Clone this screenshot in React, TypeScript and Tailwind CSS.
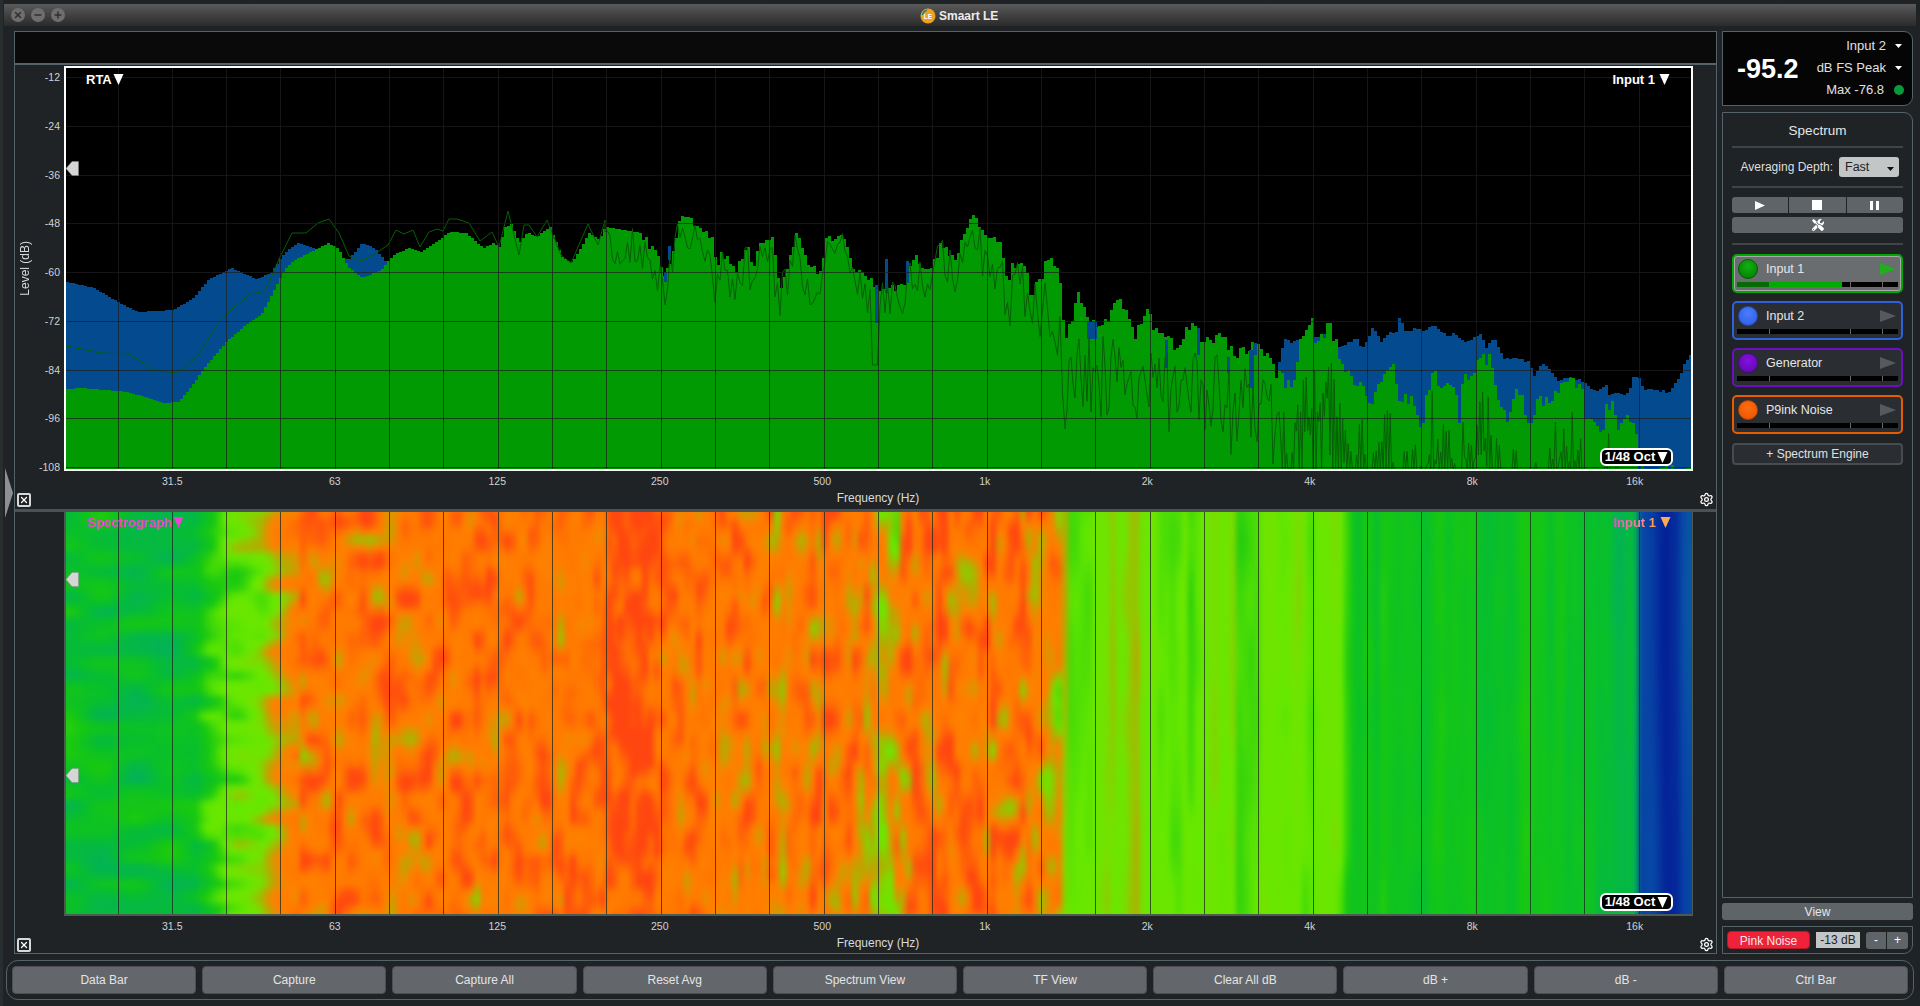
import { Minus, Plus, Settings, X } from "lucide-react";
import { FaTools } from "react-icons/fa";

type Pt = [number, number];

// traced outlines of the two traces, in page pixels
const greenPts: Pt[] = [[66,389],[80,388],[127,392],[143,397],[163,403],[177,402],[190,387],[203,368],[227,340],[247,323],[260,315],[273,290],[283,270],[293,260],[310,252],[327,243],[337,248],[347,267],[361,278],[380,270],[392,255],[408,248],[420,252],[433,243],[449,232],[465,233],[482,248],[492,243],[498,247],[504,227],[510,224],[518,243],[527,232],[535,237],[549,227],[561,257],[571,263],[588,233],[598,240],[604,227],[640,233],[658,260],[662,277],[669,260],[679,217],[695,223],[711,240],[715,267],[720,253],[736,270],[746,242],[752,267],[760,240],[771,238],[779,290],[795,233],[807,268],[820,273],[824,240],[836,237],[842,232],[852,267],[862,270],[875,287],[885,287],[901,287],[913,255],[922,270],[934,262],[940,242],[954,260],[964,233],[971,217],[987,237],[999,242],[1007,292],[1009,268],[1024,260],[1028,297],[1048,260],[1058,275],[1064,337],[1077,295],[1087,322],[1105,320],[1113,305],[1126,303],[1134,340],[1146,305],[1154,330],[1167,340],[1175,350],[1187,323],[1199,337],[1207,338],[1224,337],[1232,357],[1252,343],[1260,350],[1279,377],[1290,390],[1303,325],[1312,323],[1313,340],[1322,337],[1327,323],[1335,343],[1340,365],[1347,373],[1360,387],[1370,413],[1378,373],[1383,380],[1392,360],[1397,400],[1408,397],[1420,427],[1432,363],[1438,397],[1447,387],[1455,397],[1457,430],[1462,377],[1472,380],[1477,352],[1490,363],[1497,397],[1507,417],[1517,387],[1525,417],[1530,423],[1535,398],[1547,403],[1568,377],[1582,395],[1583,423],[1597,425],[1602,435],[1605,407],[1613,403],[1617,427],[1628,420],[1635,433],[1636,472],[1692,472]];
const bluePts: Pt[] = [[66,282],[93,288],[117,302],[137,312],[173,310],[193,297],[207,280],[230,268],[255,279],[270,273],[283,253],[297,243],[308,247],[330,255],[347,260],[361,243],[373,248],[386,263],[392,300],[400,472],[1268,472],[1276,372],[1283,337],[1290,343],[1300,340],[1313,338],[1322,335],[1337,347],[1347,343],[1355,337],[1360,348],[1368,337],[1372,327],[1380,342],[1388,332],[1397,333],[1398,318],[1405,333],[1413,328],[1423,332],[1433,325],[1440,333],[1450,337],[1453,332],[1465,343],[1472,337],[1478,333],[1485,347],[1493,338],[1503,360],[1513,358],[1527,362],[1533,377],[1540,363],[1547,367],[1557,380],[1572,377],[1583,382],[1595,393],[1605,385],[1608,395],[1627,393],[1632,378],[1638,378],[1642,388],[1657,390],[1668,392],[1677,380],[1683,363],[1692,350]];
const linePts: Pt[] = [[66,346],[102,353],[130,354],[153,370],[177,373],[197,357],[217,325],[233,308],[250,294],[265,291],[280,257],[292,233],[306,233],[318,223],[329,219],[339,233],[349,256],[361,261],[373,255],[388,245],[396,230],[404,234],[413,230],[420,247],[429,232],[437,229],[443,231],[449,219],[457,219],[469,223],[480,241],[492,232],[499,247],[508,211],[519,255],[524,225],[529,225],[537,237],[547,220],[561,255],[571,263],[588,224],[598,245],[605,220]];
const blueSpots = [[875,285,3,38],[885,259,3,34],[906,261,3,22],[668,246,3,14],[664,272,3,10],[1087,322,10,17],[1165,340,3,28],[1197,328,3,27],[1227,357,3,16],[1249,350,5,38],[1253,343,4,12]];

const profile: Pt[] = [[60,0.47],[150,0.46],[195,0.47],[210,0.56],[228,0.63],[262,0.67],[282,0.77],[300,0.84],[600,0.86],[610,0.92],[655,0.92],[668,0.85],[770,0.85],[780,0.74],[792,0.85],[865,0.84],[875,0.75],[900,0.75],[912,0.85],[1030,0.84],[1041,0.8],[1058,0.75],[1068,0.65],[1095,0.66],[1130,0.69],[1150,0.64],[1312,0.64],[1338,0.65],[1350,0.55],[1367,0.5],[1583,0.5],[1600,0.43],[1634,0.43],[1640,0.16],[1656,0.14],[1664,0.06],[1676,0.07],[1684,0.16],[1700,0.18]];
const colorStops: [number, number[]][] = [[0.05,[3,30,150]],[0.18,[8,78,168]],[0.35,[0,176,96]],[0.46,[8,191,44]],[0.55,[24,200,16]],[0.63,[102,232,0]],[0.68,[112,228,0]],[0.74,[184,168,0]],[0.79,[255,128,0]],[0.86,[255,120,0]],[0.95,[255,70,16]]];

const interp = (pts: Pt[], x: number) => {
  if (x <= pts[0][0]) return pts[0][1];
  for (let i = 1; i < pts.length; i++) {
    if (x <= pts[i][0]) {
      const [x0, y0] = pts[i - 1];
      const [x1, y1] = pts[i];
      return y0 + ((y1 - y0) * (x - x0)) / (x1 - x0 || 1);
    }
  }
  return pts[pts.length - 1][1];
};

let seed = 17;
const rand = () => {
  seed = (seed * 16807) % 2147483647;
  return (seed - 1) / 2147483646;
};

const hash = (a: number, b: number, s: number) => {
  const v = Math.sin(a * 127.1 + b * 311.7 + s * 74.7) * 43758.5453;
  return v - Math.floor(v);
};

const noise = (x: number, y: number, sx: number, sy: number, s: number) => {
  const ix = Math.floor(x / sx);
  const iy = Math.floor(y / sy);
  const smooth = (t: number) => t * t * (3 - 2 * t);
  const fx = smooth(x / sx - ix);
  const fy = smooth(y / sy - iy);
  const top = hash(ix, iy, s) * (1 - fx) + hash(ix + 1, iy, s) * fx;
  const bottom = hash(ix, iy + 1, s) * (1 - fx) + hash(ix + 1, iy + 1, s) * fx;
  return top * (1 - fy) + bottom * fy;
};

const heatColor = (v: number) => {
  if (v <= colorStops[0][0]) return `rgb(${colorStops[0][1].join(",")})`;
  for (let i = 1; i < colorStops.length; i++) {
    const [v1, c1] = colorStops[i];
    if (v <= v1) {
      const [v0, c0] = colorStops[i - 1];
      const t = (v - v0) / (v1 - v0);
      return `rgb(${c0.map((c, j) => Math.round(c + (c1[j] - c) * t)).join(",")})`;
    }
  }
  return `rgb(${colorStops[colorStops.length - 1][1].join(",")})`;
};

const heatValue = (x: number, y: number) => {
  const base = interp(profile, x);
  if (x < 300) return base + (noise(x, y, 34, 13, 1) - 0.5) * 0.2;
  if (x < 1060) {
    // blobs at the low end get narrower and taller towards the high end
    const w = Math.min(1, (x - 300) / 600);
    const blobs = (noise(x, y, 13, 20, 3) - 0.5) * 0.28 * (1 - w) + (noise(x, y, 7, 30, 4) - 0.5) * 0.3 * w;
    return base + blobs + (noise(x, y, 6, 16, 8) - 0.5) * 0.1;
  }
  if (x < 1636) return base + (noise(x, y, 8, 600, 5) - 0.5) * 0.13 + (noise(x, y, 6, 60, 6) - 0.5) * 0.05;
  return base + (noise(x, y, 10, 300, 7) - 0.5) * 0.06;
};

const buildStep = (pts: Pt[], step: number, jitter: (x: number) => number) => {
  let d = "M66 472";
  for (let x = 66; x < 1692; x += step) {
    const y = Math.min(472, interp(pts, x) + (rand() - 0.5) * jitter(x));
    d += `V${y.toFixed(0)}H${x + step}`;
  }
  return d + "V472Z";
};

const bluePath = buildStep(bluePts, 3, (x) => (x > 1280 ? 3 : 0));
const greenPath = buildStep(greenPts, 3, (x) => (x < 640 ? 0 : x < 1000 ? 8 : 14));

const buildLine = () => {
  let d = "M" + linePts.map((p) => p.join(" ")).join("L");
  let x = 605;
  let odd = false;
  while (x < 1625) {
    const env = interp(greenPts, x);
    let y = env - 6 + rand() * (42 + Math.max(0, x - 960) * 0.5);
    if (x > 870 && x < 880) y = 365;
    if (x > 1064) y = env + 15 + rand() * 85;
    if (x > 1280) y = odd ? env + 70 + rand() * 110 : env + 25 + rand() * 70;
    d += `L${x.toFixed(1)} ${Math.min(470, y).toFixed(1)}`;
    x += x < 1064 ? 2.5 : x < 1280 ? 2 : 1.4;
    odd = !odd;
  }
  return d;
};
const linePath = buildLine();

const vLines = Array.from({ length: 29 }, (_, i) => Math.round(117.5 + i * 54.33) + 0.5);
const hLines = Array.from({ length: 9 }, (_, i) => Math.round(77 + i * 48.75) + 0.5);

const heatCells: { x: number; y: number; fill: string }[] = [];
for (let x = 60; x < 1700; x += 6) {
  for (let y = 504; y < 924; y += 8) {
    heatCells.push({ x, y, fill: heatColor(heatValue(x + 3, y + 4)) });
  }
}

const Triangle = ({ className }: { className: string }) => (
  <svg viewBox="0 0 10 11" className={className}>
    <polygon points="0,0 10,0 5,11" fill="currentColor" />
  </svg>
);

const Caret = ({ className }: { className: string }) => (
  <svg viewBox="0 0 7 4" className={`w-[7px] h-[4px] ${className}`}>
    <polygon points="0,0 7,0 3.5,4" fill="currentColor" />
  </svg>
);

const Handle = ({ className }: { className: string }) => (
  <svg viewBox="0 0 13 15" className={`absolute left-0 w-[13px] h-[15px] ${className}`}>
    <polygon points="0,7.5 6,0.5 12.5,0.5 12.5,14.5 6,14.5" fill="#d6d6d6" stroke="#8a8a8a" strokeWidth="0.5" />
  </svg>
);

const CloseBox = () => (
  <button className="ml-[2px] w-[14px] h-[14px] flex items-center justify-center rounded-[2px] border-2 border-[#d8d8d8] bg-[#1f2326] text-white">
    <X size={10} strokeWidth={3} />
  </button>
);

const OctPill = ({ className }: { className: string }) => (
  <div className={`absolute flex items-center justify-center gap-[2px] w-[73px] h-[18px] rounded-md border-2 border-white bg-black text-[13px] font-bold text-white ${className}`}>
    1/48 Oct
    <Triangle className="w-[11px] h-[11px]" />
  </div>
);

const FreqLabels = () => (
  <div className="mt-[3px] h-[14px] pl-[76px] flex text-[10.5px] leading-[14px] text-[#d0d2d4]">
    {["31.5", "63", "125", "250", "500", "1k", "2k", "4k", "8k", "16k"].map((f) => (
      <div key={f} className="w-[163px] text-center">{f}</div>
    ))}
  </div>
);

const PlotFooter = () => (
  <div className="mt-[2px] h-[17px] flex items-end">
    <CloseBox />
    <div className="flex-1 pl-[26px] text-center text-[12px] leading-[15px] text-[#d8dadc] self-center">Frequency (Hz)</div>
    <Settings size={15} className="text-white mr-[2px]" />
  </div>
);

const RtaPlot = () => (
  <div className="flex mt-px h-[405px]">
    <div className="w-[49px] flex">
      <div className="w-[20px] flex items-center justify-center">
        <span className="[writing-mode:vertical-rl] rotate-180 text-[12px] text-[#d8dadc]">Level (dB)</span>
      </div>
      <div className="flex-1 flex flex-col justify-between items-end pt-[4px] -mb-[3px] pr-[4px] text-[10.5px] leading-[14px] text-[#d0d2d4]">
        {["-12", "-24", "-36", "-48", "-60", "-72", "-84", "-96", "-108"].map((l) => (
          <div key={l}>{l}</div>
        ))}
      </div>
    </div>
    <div className="relative w-[1629px] border-2 border-white bg-black">
      <svg viewBox="66 68 1625 401" className="block w-full h-full">
        <path d={bluePath} fill="#034a8f" shapeRendering="crispEdges" />
        <path d={greenPath} fill="#029a02" shapeRendering="crispEdges" />
        {blueSpots.map(([x, y, w, h]) => (
          <rect key={`${x}-${y}`} x={x} y={y} width={w} height={h} fill="#034a8f" />
        ))}
        <path d={linePath} fill="none" stroke="#075f07" strokeWidth="1" />
        {vLines.map((x) => (
          <line key={x} x1={x} x2={x} y1="68" y2="469" stroke="rgba(30,30,30,0.7)" shapeRendering="crispEdges" />
        ))}
        {hLines.map((y) => (
          <line key={y} x1="66" x2="1692" y1={y} y2={y} stroke="rgba(30,30,30,0.7)" shapeRendering="crispEdges" />
        ))}
      </svg>
      <div className="absolute left-[20px] top-[2px] flex items-center gap-[1px] text-[13px] font-bold text-white">
        RTA
        <Triangle className="w-[11px] h-[11px]" />
      </div>
      <div className="absolute right-[21px] top-[2px] flex items-center gap-[4px] text-[13px] font-bold text-white">
        Input 1
        <Triangle className="w-[11px] h-[11px]" />
      </div>
      <Handle className="top-[93px]" />
      <OctPill className="left-[1534px] top-[380px]" />
    </div>
  </div>
);

const SpectroPlot = () => (
  <div className="flex h-[404px] shrink-0">
    <div className="w-[49px]" />
    <div className="relative w-[1629px] border-l-2 border-r border-b-2 border-[#4d5a50]">
      <svg viewBox="66 512 1626 402" className="block w-full h-full">
        <filter id="heat-blur" x="0" y="0" width="100%" height="100%" colorInterpolationFilters="sRGB">
          <feGaussianBlur stdDeviation="2.5 3.5" />
        </filter>
        <g filter="url(#heat-blur)">
          {heatCells.map((c) => (
            <rect key={`${c.x}-${c.y}`} x={c.x} y={c.y} width="6.5" height="8.5" fill={c.fill} />
          ))}
        </g>
        {vLines.map((x) => (
          <line key={x} x1={x} x2={x} y1="512" y2="914" stroke="rgba(30,40,30,0.75)" shapeRendering="crispEdges" />
        ))}
      </svg>
      <div className="absolute left-[21px] top-px flex items-center gap-[1px] text-[13px] font-bold text-[#f040d0]">
        Spectrograph
        <Triangle className="w-[11px] h-[11px]" />
      </div>
      <div className="absolute right-[21px] top-px flex items-center gap-[4px] text-[13px] font-bold">
        <span className="bg-linear-to-r from-[#f040d0] to-[#ffa050] bg-clip-text text-transparent">Input 1</span>
        <Triangle className="w-[11px] h-[11px] text-[#ffa858]" />
      </div>
      <Handle className="top-[60px]" />
      <Handle className="top-[256px]" />
      <OctPill className="left-[1534px] top-[381px]" />
    </div>
  </div>
);

const channels = [
  { name: "Input 1", active: true, border: "border-[#00a800]", led: "bg-[radial-gradient(circle_at_50%_35%,#12b012,#007a00)] border-[#055a05]", level: 72 },
  { name: "Input 2", active: false, border: "border-[#2f62d8]", led: "bg-[radial-gradient(circle_at_50%_35%,#4a7dff,#2c5ae0)] border-[#2448a8]", level: 0 },
  { name: "Generator", active: false, border: "border-[#6a10c0]", led: "bg-[radial-gradient(circle_at_50%_35%,#8410e0,#5c08a8)] border-[#4a0888]", level: 0 },
  { name: "P9ink Noise", active: false, border: "border-[#e85c00]", led: "bg-[radial-gradient(circle_at_50%_35%,#ff6c10,#e85400)] border-[#b04000]", level: 0 },
];

const ChannelCard = ({ name, active, border, led, level }: (typeof channels)[number]) => (
  <div className={`h-[39px] rounded-[5px] border-2 ${border} ${active ? "bg-[#6a6d70] shadow-[inset_0_0_0_1px_#a8a8a8]" : "bg-[#2a2d32]"}`}>
    <div className="flex items-center h-[26px] pl-[4px] pr-[5px]">
      <div className={`w-[20px] h-[20px] rounded-full border ${led}`} />
      <span className="ml-[8px] flex-1 text-[12.5px] text-[#e6e6e6]">{name}</span>
      <svg viewBox="0 0 16 12" className="w-[16px] h-[12px]">
        <polygon points="0,0 16,6 0,12" fill={active ? "#1fb01f" : "#565a5e"} />
      </svg>
    </div>
    <div className="mx-[3px] h-[5px] flex gap-px bg-[#6a6a6a]">
      <div className={`w-[32px] ${level ? "bg-[#056b05]" : "bg-black"}`} />
      <div className="w-[80px] bg-black">
        {level > 0 && <div className="h-full w-[72px] bg-[#00ac00]" />}
      </div>
      <div className="w-[31px] bg-black" />
      <div className="flex-1 bg-black" />
    </div>
  </div>
);

const Divider = () => <div className="h-[2px] bg-[#3f464b]" />;

const MeterBox = () => (
  <div className="h-[75px] shrink-0 rounded-r-[9px] border border-[#55626a] bg-[#050505] flex items-center">
    <div className="ml-[14px] mt-[2px] text-[27px] font-bold text-white leading-none">-95.2</div>
    <div className="flex-1 mb-[2px] flex flex-col items-end text-[13px] leading-[22px] text-[#e0e0e0]">
      <div className="flex items-center">
        Input 2
        <div className="w-[26px] flex justify-end pr-[10px]"><Caret className="text-white" /></div>
      </div>
      <div className="flex items-center">
        dB FS Peak
        <div className="w-[26px] flex justify-end pr-[10px]"><Caret className="text-white" /></div>
      </div>
      <div className="flex items-center">
        Max -76.8
        <div className="w-[28px] flex justify-end pr-[8px]"><div className="w-[10px] h-[10px] rounded-full bg-[#0a9a3c]" /></div>
      </div>
    </div>
  </div>
);

const SpectrumPanel = () => (
  <div className="mt-[6px] h-[786px] shrink-0 rounded-tr-[9px] border border-[#55626a] px-[9px]">
    <div className="h-[33px] pt-[3px] flex items-center justify-center text-[13.5px] text-[#e6e6e6]">Spectrum</div>
    <Divider />
    <div className="h-[38px] flex items-center justify-end gap-[6px] pr-[4px]">
      <span className="text-[12px] text-[#dedede]">Averaging Depth:</span>
      <div className="w-[60px] h-[20px] rounded-[3px] bg-[#c2c6c6] flex items-center justify-between pl-[6px] pr-[5px] text-[12.5px] text-[#222]">
        Fast
        <Caret className="text-[#111] mt-[4px]" />
      </div>
    </div>
    <Divider />
    <div className="mt-[9px] h-[16px] flex gap-px">
      <div className="flex-1 rounded-l-[3px] bg-[#5f6468] flex items-center justify-center">
        <svg viewBox="0 0 10 9" className="w-[10px] h-[9px]"><polygon points="0,0 10,4.5 0,9" fill="#fff" /></svg>
      </div>
      <div className="flex-1 bg-[#5f6468] flex items-center justify-center">
        <div className="w-[10px] h-[10px] bg-white" />
      </div>
      <div className="flex-1 rounded-r-[3px] bg-[#5f6468] flex items-center justify-center gap-[3px]">
        <div className="w-[3px] h-[9px] bg-white" />
        <div className="w-[3px] h-[9px] bg-white" />
      </div>
    </div>
    <div className="mt-[4px] h-[16px] rounded-[3px] bg-[#5f6468] flex items-center justify-center text-white">
      <FaTools size={12} />
    </div>
    <div className="mt-[10px]"><Divider /></div>
    <div className="mt-[9px] flex flex-col gap-[8px]">
      {channels.map((c) => (
        <ChannelCard key={c.name} {...c} />
      ))}
    </div>
    <div className="mt-[9px] h-[22px] rounded-[4px] border-2 border-[#474c51] bg-[#2a2d32] flex items-center justify-center text-[12px] text-[#e0e0e0]">
      + Spectrum Engine
    </div>
  </div>
);

const PinkNoise = () => (
  <div className="mt-[6px] h-[28px] rounded-br-[9px] border border-[#55626a] flex items-center pl-[4px] pr-[4px]">
    <button className="w-[83px] h-[18px] rounded-[4px] border border-[#b81828] bg-[#ee2238] text-[12px] text-[#f4e8e8]">Pink Noise</button>
    <div className="ml-[6px] w-[44px] h-[16px] bg-[#c2c6c6] text-center text-[12px] leading-[16px] text-[#222]">-13 dB</div>
    <div className="ml-[6px] flex gap-px">
      <div className="w-[20px] h-[17px] rounded-l-[3px] bg-[#5f6468] text-center text-[12px] leading-[17px] text-white">-</div>
      <div className="w-[21px] h-[17px] rounded-r-[3px] bg-[#5f6468] text-center text-[12px] leading-[17px] text-white">+</div>
    </div>
  </div>
);

const bottomButtons = ["Data Bar", "Capture", "Capture All", "Reset Avg", "Spectrum View", "TF View", "Clear All dB", "dB +", "dB -", "Ctrl Bar"];

export default function App() {
  return (
    <div className="relative w-[1920px] h-[1006px] overflow-hidden bg-[#1f2326] border-l-[3px] border-[#282d30] [font-family:'Liberation_Sans',sans-serif]">
      {/* Title bar */}
      <div className="mt-[4px] ml-px mr-[4px] h-[22px] absolute top-0 left-0 right-0 bg-linear-to-b from-[#5a5a5a] to-[#2b2b2b]" />
      <div className="relative h-[26px] pt-[4px] flex items-center">
        <div className="flex gap-[6px] pl-[8px]">
          {[X, Minus, Plus].map((Icon, i) => (
            <div key={i} className="w-[14px] h-[14px] rounded-full bg-[#6e6e6e] flex items-center justify-center text-[#2e2e2e]">
              <Icon size={10} strokeWidth={3.5} />
            </div>
          ))}
        </div>
        <div className="absolute left-[917px] top-[7px] flex items-center gap-[3px] text-[12px] font-bold text-[#ececec]">
          <svg viewBox="0 0 16 16" className="w-[16px] h-[16px]">
            <circle cx="8" cy="8" r="7.5" fill="#eea21c" />
            <path d="M2.5 7 A6 6 0 0 1 7 2.2" stroke="#1c7f78" strokeWidth="1.4" fill="none" />
            <text x="8" y="10.5" fontSize="6.5" fill="#fff" textAnchor="middle" fontWeight="bold">LE</text>
          </svg>
          Smaart LE
        </div>
      </div>

      {/* Collapse handle */}
      <svg viewBox="0 0 8 50" className="absolute left-[2px] top-[468px] w-[8px] h-[50px]">
        <polygon points="0,0 8,25 0,50" fill="#8c9094" />
      </svg>

      <div className="mt-[5px] pl-[11px] flex gap-[5px] h-[923px]">
        {/* Plots */}
        <div className="w-[1703px] flex flex-col border border-[#55626a]">
          <div className="h-[33px] shrink-0 bg-[#0a0a0a] border-b-2 border-[#55626a]" />
          <div className="shrink-0 h-[447px] border-b-[3px] border-[#4a5257]">
            <RtaPlot />
            <FreqLabels />
            <PlotFooter />
          </div>
          <SpectroPlot />
          <FreqLabels />
          <PlotFooter />
        </div>

        {/* Right column */}
        <div className="w-[191px] flex flex-col">
          <MeterBox />
          <SpectrumPanel />
          <div className="mt-[5px] h-[17px] shrink-0 rounded-[3px] bg-[#5f6468] flex items-center justify-center text-[12px] text-[#e6e6e6]">View</div>
          <PinkNoise />
        </div>
      </div>

      {/* Bottom bar */}
      <div className="mt-[6px] ml-[3px] w-[1908px] h-[40px] rounded-[12px] border border-[#55626a] flex items-center gap-[6px] px-[5px]">
        {bottomButtons.map((b) => (
          <button key={b} className="flex-1 h-[28px] rounded-[4px] border border-[#4c5054] bg-[#63676b] text-[12px] text-[#e4e4e4]">{b}</button>
        ))}
      </div>
    </div>
  );
}
